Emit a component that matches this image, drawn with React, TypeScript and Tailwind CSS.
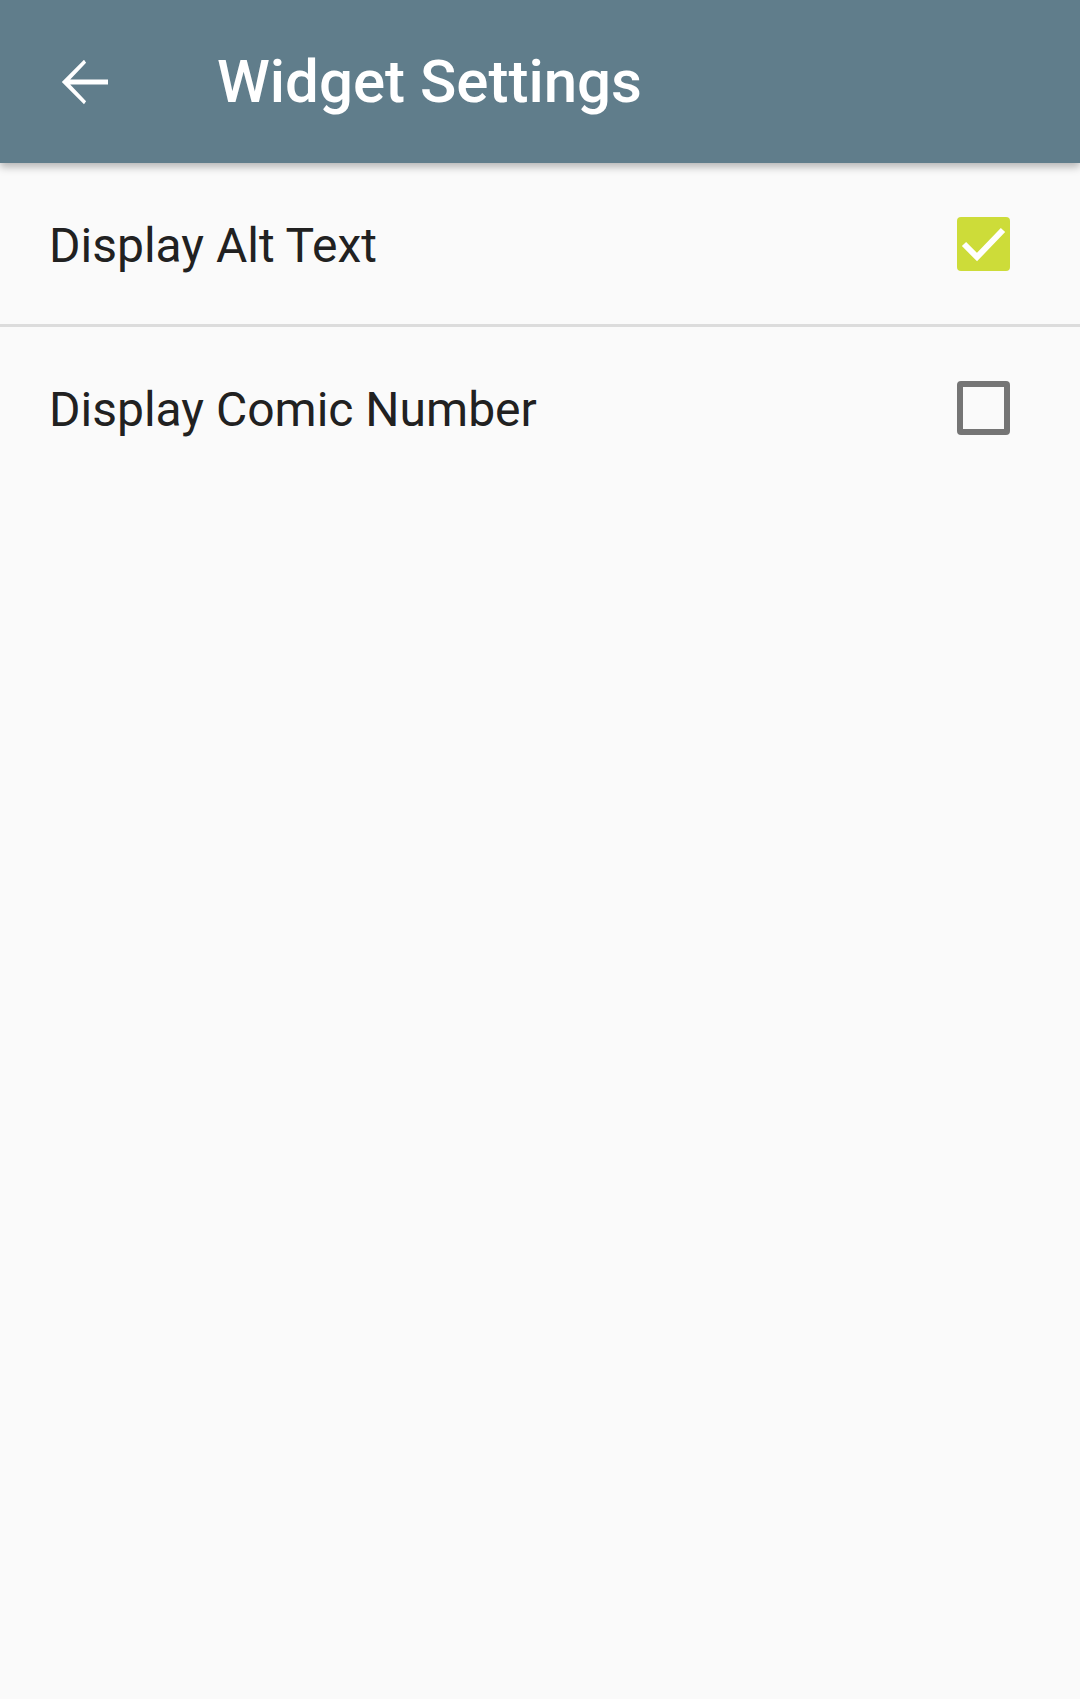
import React, { useState } from 'react';

interface SettingRowProps {
  label: string;
  checked: boolean;
  onToggle: () => void;
}

function CheckBox({ checked }: { checked: boolean }) {
  if (checked) {
    return (
      <div className="w-[53px] h-[54px] rounded-[4px] bg-[#cddc39] flex items-center justify-center">
        <svg width="53" height="54" viewBox="0 0 53 54">
          <path d="M7 27 L20 40 L46 13" fill="none" stroke="#ffffff" strokeWidth="6" />
        </svg>
      </div>
    );
  }
  return <div className="w-[53px] h-[54px] rounded-[4px] border-[6px] border-[#757575]" />;
}

function SettingRow({ label, checked, onToggle }: SettingRowProps) {
  return (
    <div
      className="h-[161px] flex items-center justify-between pl-[49px] pr-[70px] cursor-pointer"
      onClick={onToggle}
    >
      <span className="pt-[5px] text-[48px] leading-none text-[#212121]">{label}</span>
      <CheckBox checked={checked} />
    </div>
  );
}

export default function App() {
  const [altText, setAltText] = useState(true);
  const [comicNumber, setComicNumber] = useState(false);

  return (
    <div
      className="w-[1080px] h-[1699px] bg-[#fafafa] overflow-hidden"
      style={{ fontFamily: 'Roboto, "Noto Sans", sans-serif' }}
    >
      <header className="relative z-10 h-[163px] bg-[#607d8b] flex items-center shadow-[0_4px_8px_rgba(0,0,0,0.28)]">
        <button className="ml-[48px] w-[72px] h-[72px] flex items-center justify-center" aria-label="Back">
          <svg width="72" height="72" viewBox="0 0 24 24" fill="#ffffff">
            <path d="M20 11.2H7.4l5.3-5.6L12 4.6 4.6 12l7.4 7.4.7-1-5.3-5.6H20v-1.6z" />
          </svg>
        </button>
        <h1 className="ml-[97px] text-[60px] font-medium leading-none text-white">Widget Settings</h1>
      </header>

      <SettingRow label="Display Alt Text" checked={altText} onToggle={() => setAltText(!altText)} />
      <div className="h-[3px] bg-[#dcdcdc]" />
      <SettingRow
        label="Display Comic Number"
        checked={comicNumber}
        onToggle={() => setComicNumber(!comicNumber)}
      />
    </div>
  );
}
